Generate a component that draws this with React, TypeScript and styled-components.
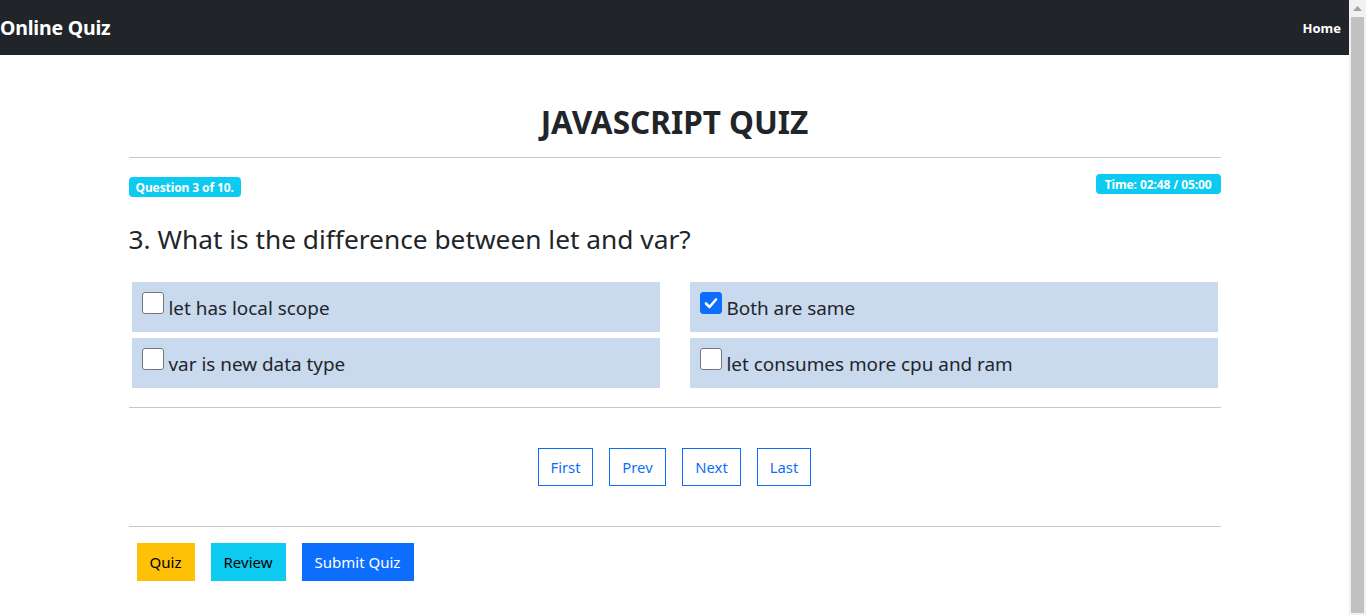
import React from "react";
import styled, { createGlobalStyle } from "styled-components";

const Global = createGlobalStyle`
  html, body { margin: 0; padding: 0; overflow: hidden; }
  body { font-family: "Noto Sans", "Open Sans", sans-serif; color: #212529; background: #fff; }
  * { box-sizing: border-box; }
`;

const Frame = styled.div`
  display: flex;
  height: 100vh;
  width: 100vw;
`;

const Page = styled.div`
  flex: 1;
  min-width: 0;
  overflow: hidden;
`;

const NavBar = styled.nav`
  height: 55px;
  background: #212529;
  display: flex;
  align-items: center;
  justify-content: space-between;
  padding: 0 8px 0 0;
`;

const Brand = styled.div`
  color: #fff;
  font-weight: 700;
  font-size: 19.5px;
  letter-spacing: -0.2px;
`;

const NavLink = styled.div`
  color: #fff;
  font-weight: 700;
  font-size: 13px;
`;

const Container = styled.main`
  width: 1092px;
  margin: 0 auto;
  display: flex;
  flex-direction: column;
`;

const Title = styled.h2`
  margin: 48px 0 0;
  font-size: 31.5px;
  line-height: 38px;
  font-weight: 700;
  text-align: center;
  color: #212529;
`;

const Rule = styled.hr<{ $top: number }>`
  margin: ${(p) => p.$top}px 0 0;
  border: 0;
  border-top: 1px solid #c8c8c8;
  height: 0;
`;

const MetaRow = styled.div`
  display: flex;
  justify-content: space-between;
  margin-top: 16px;
`;

const Badge = styled.span<{ $offset?: number; $pad?: number }>`
  display: inline-flex;
  align-items: center;
  height: 20px;
  padding: 0 ${(p) => p.$pad ?? 7}px;
  background: #0dcaf0;
  color: #fff;
  font-size: 12px;
  font-weight: 700;
  border-radius: 4px;
  margin-top: ${(p) => p.$offset ?? 0}px;
  letter-spacing: -0.1px;
`;

const Question = styled.h3`
  margin: 25px 0 0;
  font-size: 26.3px;
  line-height: 34px;
  font-weight: 400;
  color: #212529;
`;

const OptionsGrid = styled.div`
  display: grid;
  grid-template-columns: 1fr 1fr;
  column-gap: 30px;
  row-gap: 6px;
  padding: 0 3px;
  margin-top: 26px;
`;

const Option = styled.label`
  display: flex;
  align-items: flex-start;
  height: 50px;
  background: #c9d9ee;
  padding: 10px 0 0 10px;
  font-size: 18.9px;
  color: #212529;
  gap: 5px;
`;

const Box = styled.span<{ $checked?: boolean }>`
  width: 22px;
  height: 22px;
  flex: none;
  border-radius: 3px;
  border: 1px solid ${(p) => (p.$checked ? "#0d6efd" : "#767676")};
  background: ${(p) => (p.$checked ? "#0d6efd" : "#fff")};
  display: flex;
  align-items: center;
  justify-content: center;
`;

const OptionText = styled.span`
  line-height: 28px;
  margin-top: 2px;
`;

const Pager = styled.div`
  display: flex;
  justify-content: center;
  gap: 16px;
  margin-top: 40px;
`;

const PageButton = styled.button<{ $w: number }>`
  width: ${(p) => p.$w}px;
  height: 38px;
  border: 1px solid #0d6efd;
  background: #fff;
  color: #0d6efd;
  font-family: inherit;
  font-size: 14.8px;
  padding: 0;
  border-radius: 0;
`;

const ActionBar = styled.div`
  display: flex;
  gap: 16px;
  padding-left: 8px;
  margin-top: 16px;
`;

const ActionButton = styled.button<{ $bg: string; $fg: string; $w: number }>`
  width: ${(p) => p.$w}px;
  height: 38px;
  border: 0;
  background: ${(p) => p.$bg};
  color: ${(p) => p.$fg};
  font-family: inherit;
  font-size: 15px;
  padding: 0;
  border-radius: 0;
`;

const ScrollTrack = styled.div`
  width: 17px;
  flex: none;
  background: #f1f1f1;
  display: flex;
  flex-direction: column;
  align-items: center;
`;

const Arrow = styled.div`
  height: 17px;
  width: 17px;
  display: flex;
  align-items: center;
  justify-content: center;
`;

const Thumb = styled.div`
  flex: 1;
  width: 13px;
  background: #c1c1c1;
  margin: 0 0 2px;
`;

const Check = () => (
  <svg width="16" height="16" viewBox="0 0 16 16">
    <path d="M3 8.5 L6.5 12 L13 4.5" fill="none" stroke="#fff" strokeWidth="2.6" strokeLinecap="round" strokeLinejoin="round" />
  </svg>
);

const options = [
  { text: "let has local scope", checked: false },
  { text: "Both are same", checked: true },
  { text: "var is new data type", checked: false },
  { text: "let consumes more cpu and ram", checked: false },
];

export default function App() {
  return (
    <>
      <Global />
      <Frame>
        <Page>
          <NavBar>
            <Brand>Online Quiz</Brand>
            <NavLink>Home</NavLink>
          </NavBar>
          <Container>
            <Title>JAVASCRIPT QUIZ</Title>
            <Rule $top={16} />
            <MetaRow>
              <Badge $offset={3}>Question 3 of 10.</Badge>
              <Badge $pad={9}>Time: 02:48 / 05:00</Badge>
            </MetaRow>
            <Question>3. What is the difference between let and var?</Question>
            <OptionsGrid>
              {options.map((o) => (
                <Option key={o.text}>
                  <Box $checked={o.checked}>{o.checked && <Check />}</Box>
                  <OptionText>{o.text}</OptionText>
                </Option>
              ))}
            </OptionsGrid>
            <Rule $top={19} />
            <Pager>
              <PageButton $w={55}>First</PageButton>
              <PageButton $w={57}>Prev</PageButton>
              <PageButton $w={59}>Next</PageButton>
              <PageButton $w={54}>Last</PageButton>
            </Pager>
            <Rule $top={40} />
            <ActionBar>
              <ActionButton $bg="#ffc107" $fg="#000" $w={58}>Quiz</ActionButton>
              <ActionButton $bg="#0dcaf0" $fg="#000" $w={75}>Review</ActionButton>
              <ActionButton $bg="#0d6efd" $fg="#fff" $w={112}>Submit Quiz</ActionButton>
            </ActionBar>
          </Container>
        </Page>
        <ScrollTrack>
          <Arrow>
            <svg width="9" height="5" viewBox="0 0 9 5"><path d="M0 5 L4.5 0 L9 5 Z" fill="#a3a3a3" /></svg>
          </Arrow>
          <Thumb />
        </ScrollTrack>
      </Frame>
    </>
  );
}
